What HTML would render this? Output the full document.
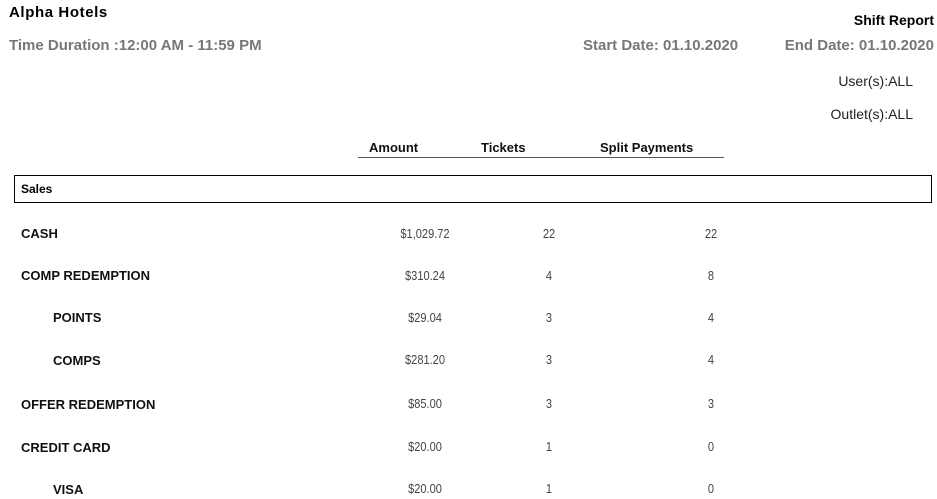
<!DOCTYPE html>
<html><head><style>
body{margin:0;width:937px;height:499px;background:#fff;font-family:"Liberation Sans",sans-serif;position:relative;overflow:hidden}
.a{position:absolute;white-space:nowrap}
.g{color:#777;font-weight:bold;font-size:15px}
.lbl{font-size:13px;font-weight:bold;color:#111;left:21px}
.sub{left:53px}
.n{font-size:13px;color:#444;transform:scaleX(.85)}
.am{width:90px;text-align:center;left:380px}
.tk{width:40px;text-align:center;left:529px}
.sp{width:40px;text-align:center;left:691px}
.h{font-size:13px;font-weight:bold;color:#111}
</style></head><body>
<div class="a" style="left:9px;top:4px;font-size:15px;letter-spacing:.6px;font-weight:bold;color:#000">Alpha Hotels</div>
<div class="a" style="right:3px;top:12px;font-size:14px;font-weight:bold;color:#000">Shift Report</div>
<div class="a g" style="left:9px;top:37px">Time Duration :12:00 AM - 11:59 PM</div>
<div class="a g" style="left:583px;top:37px">Start Date: 01.10.2020</div>
<div class="a g" style="right:3px;top:37px">End Date: 01.10.2020</div>
<div class="a" style="right:24px;top:73px;font-size:14px;color:#222">User(s):ALL</div>
<div class="a" style="right:24px;top:106px;font-size:14px;color:#222">Outlet(s):ALL</div>
<div class="a h" style="left:369px;top:140px">Amount</div>
<div class="a h" style="left:481px;top:140px">Tickets</div>
<div class="a h" style="left:600px;top:140px">Split Payments</div>
<div class="a" style="left:358px;top:157px;width:366px;height:1px;background:#555"></div>
<div class="a" style="left:14px;top:175px;width:916px;height:26px;border:1px solid #000"></div>
<div class="a" style="left:21px;top:182px;font-size:12px;font-weight:bold;color:#000">Sales</div>

<div class="a lbl" style="top:226px">CASH</div>
<div class="a n am" style="top:226px">$1,029.72</div><div class="a n tk" style="top:226px">22</div><div class="a n sp" style="top:226px">22</div>

<div class="a lbl" style="top:268px">COMP REDEMPTION</div>
<div class="a n am" style="top:268px">$310.24</div><div class="a n tk" style="top:268px">4</div><div class="a n sp" style="top:268px">8</div>

<div class="a lbl sub" style="top:310px">POINTS</div>
<div class="a n am" style="top:310px">$29.04</div><div class="a n tk" style="top:310px">3</div><div class="a n sp" style="top:310px">4</div>

<div class="a lbl sub" style="top:353px">COMPS</div>
<div class="a n am" style="top:352px">$281.20</div><div class="a n tk" style="top:352px">3</div><div class="a n sp" style="top:352px">4</div>

<div class="a lbl" style="top:397px">OFFER REDEMPTION</div>
<div class="a n am" style="top:396px">$85.00</div><div class="a n tk" style="top:396px">3</div><div class="a n sp" style="top:396px">3</div>

<div class="a lbl" style="top:440px">CREDIT CARD</div>
<div class="a n am" style="top:439px">$20.00</div><div class="a n tk" style="top:439px">1</div><div class="a n sp" style="top:439px">0</div>

<div class="a lbl sub" style="top:482px">VISA</div>
<div class="a n am" style="top:481px">$20.00</div><div class="a n tk" style="top:481px">1</div><div class="a n sp" style="top:481px">0</div>
</body></html>
